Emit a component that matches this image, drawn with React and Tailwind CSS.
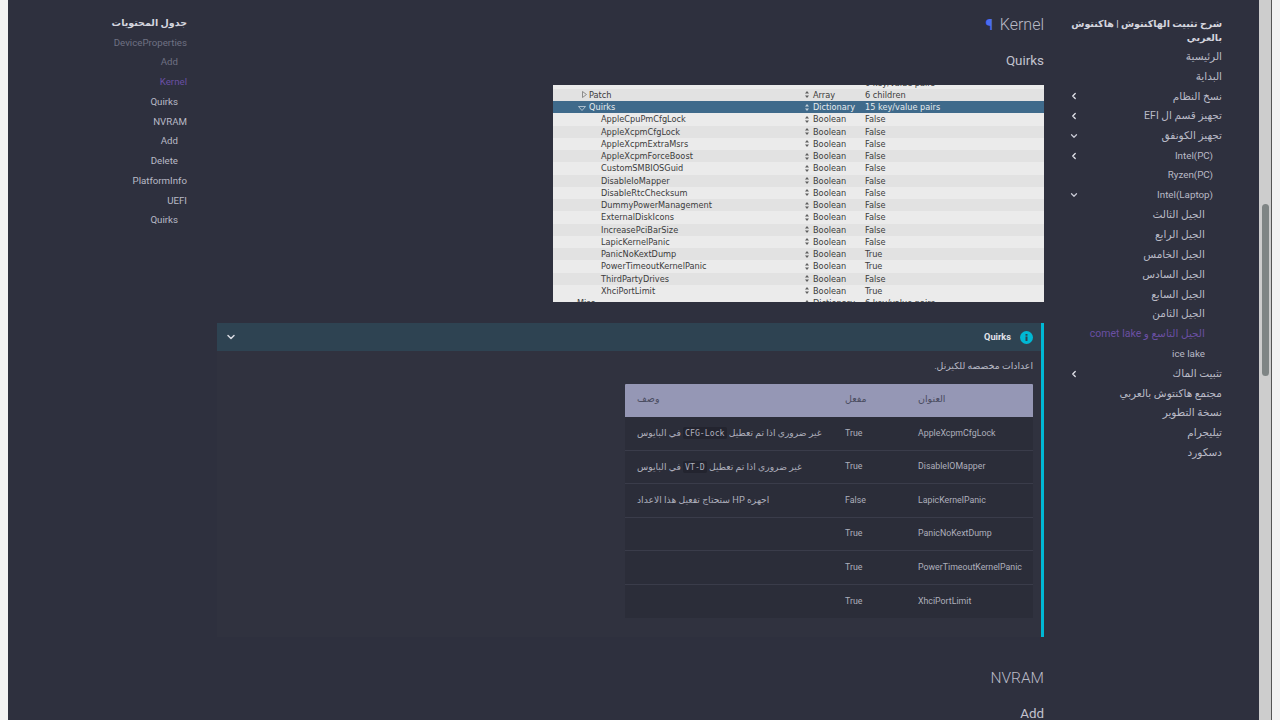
import { ChevronDown, ChevronLeft } from 'lucide-react'

const sideItems = [
  { t: 'الرئيسية' },
  { t: 'البداية' },
  { t: 'نسخ النظام', c: 'left' },
  { t: 'تجهيز قسم ال EFI', c: 'left' },
  { t: 'تجهيز الكونفق', c: 'down' },
  { t: 'Intel(PC)', c: 'left', lvl: 1, latin: true },
  { t: 'Ryzen(PC)', lvl: 1, latin: true },
  { t: 'Intel(Laptop)', c: 'down', lvl: 1, latin: true },
  { t: 'الجيل الثالث', lvl: 2 },
  { t: 'الجيل الرابع', lvl: 2 },
  { t: 'الجيل الخامس', lvl: 2 },
  { t: 'الجيل السادس', lvl: 2 },
  { t: 'الجيل السابع', lvl: 2 },
  { t: 'الجيل الثامن', lvl: 2 },
  { t: 'الجيل التاسع و comet lake', lvl: 2, active: true },
  { t: 'ice lake', lvl: 2, latin: true },
  { t: 'تثبيت الماك', c: 'left' },
  { t: 'مجتمع هاكنتوش بالعربي' },
  { t: 'نسخة التطوير' },
  { t: 'تيليجرام' },
  { t: 'دسكورد' },
]

const tocItems = [
  { t: 'DeviceProperties', dim: true },
  { t: 'Add', sub: true, dim: true },
  { t: 'Kernel', active: true },
  { t: 'Quirks', sub: true },
  { t: 'NVRAM' },
  { t: 'Add', sub: true },
  { t: 'Delete', sub: true },
  { t: 'PlatformInfo' },
  { t: 'UEFI' },
  { t: 'Quirks', sub: true },
]

const plist = [
  ['AppleCpuPmCfgLock', 'False'],
  ['AppleXcpmCfgLock', 'False'],
  ['AppleXcpmExtraMsrs', 'False'],
  ['AppleXcpmForceBoost', 'False'],
  ['CustomSMBIOSGuid', 'False'],
  ['DisableIoMapper', 'False'],
  ['DisableRtcChecksum', 'False'],
  ['DummyPowerManagement', 'False'],
  ['ExternalDiskIcons', 'False'],
  ['IncreasePciBarSize', 'False'],
  ['LapicKernelPanic', 'False'],
  ['PanicNoKextDump', 'True'],
  ['PowerTimeoutKernelPanic', 'True'],
  ['ThirdPartyDrives', 'False'],
  ['XhciPortLimit', 'True'],
]

const quirks = [
  { name: 'AppleXcpmCfgLock', on: 'True', desc: ['غير ضروري اذا تم تعطيل ', 'CFG-Lock', ' في البايوس'] },
  { name: 'DisableIOMapper', on: 'True', desc: ['غير ضروري اذا تم تعطيل ', 'VT-D', ' في البايوس'] },
  { name: 'LapicKernelPanic', on: 'False', desc: ['اجهزه HP ستحتاج تفعيل هذا الاعداد'] },
  { name: 'PanicNoKextDump', on: 'True' },
  { name: 'PowerTimeoutKernelPanic', on: 'True' },
  { name: 'XhciPortLimit', on: 'True' },
]

function PlistRow({ indent, name, type, value, even, selected, arrow }) {
  return (
    <div className={`flex h-[12.26px] items-center text-[8.2px] leading-none ${selected ? 'bg-[#3f6a8b] text-[#e6eaee]' : even ? 'bg-[#e2e2e2] text-[#3c3c3c]' : 'bg-[#ebebeb] text-[#3c3c3c]'}`}>
      <div className={`w-[252px] shrink-0 flex items-center ${indent}`}>
        {arrow === 'right' && (
          <svg width="5" height="7" viewBox="0 0 5 7" className="mr-[2px] -ml-[7px]">
            <path d="M0.5 0.5L4.5 3.5L0.5 6.5Z" fill="none" stroke="#777" strokeWidth="0.8" />
          </svg>
        )}
        {arrow === 'down' && (
          <svg width="8" height="5" viewBox="0 0 8 5" className="mr-[3px] -ml-[11px] mt-[2px]">
            <path d="M0.5 0.5L7.5 0.5L4 4.5Z" fill="none" stroke="#c8d4de" strokeWidth="0.8" />
          </svg>
        )}
        {name}
      </div>
      <div className="w-[60px] shrink-0 flex items-center gap-[4px]">
        {type && (
          <svg width="4" height="7" viewBox="0 0 4 7" className="opacity-80">
            <path d="M2 0L4 2.6H0ZM2 7L0 4.4H4Z" fill="currentColor" />
          </svg>
        )}
        {type}
      </div>
      <div>{value}</div>
    </div>
  )
}

function PlistShot() {
  return (
    <div dir="ltr" className="w-[491px] h-[217px] overflow-hidden bg-[#e8e8e8] font-['DejaVu_Sans',sans-serif]">
      <div className="-mt-[8.5px]">
        <PlistRow indent="pl-[24px]" name="" type="" value="6 key/value pairs" />
        <PlistRow indent="pl-[36px]" name="Patch" type="Array" value="6 children" even arrow="right" />
        <PlistRow indent="pl-[36px]" name="Quirks" type="Dictionary" value="15 key/value pairs" selected arrow="down" />
        {plist.map(([k, v], i) => (
          <PlistRow key={k} indent="pl-[48px]" name={k} type="Boolean" value={v} even={i % 2 === 1} />
        ))}
        <PlistRow indent="pl-[24px]" name="Misc" type="Dictionary" value="6 key/value pairs" />
      </div>
    </div>
  )
}

function SideRow({ item }) {
  const pad = item.lvl === 1 ? 'pr-[9px]' : item.lvl === 2 ? 'pr-[17px]' : ''
  return (
    <div className={`flex items-center justify-between h-[19.8px] ${pad}`}>
      <bdi className={`${item.latin ? 'text-[9.8px]' : ''} ${item.active ? 'text-[#6a4fa3]' : 'text-[#b9bac6]'}`}>{item.t}</bdi>
      {item.c === 'left' && <ChevronLeft size={10} strokeWidth={3} className="text-[#e4e5ec]" />}
      {item.c === 'down' && <ChevronDown size={10} strokeWidth={3} className="text-[#c8c9d4]" />}
    </div>
  )
}

function Sidebar() {
  return (
    <aside className="w-[153px] shrink-0 pt-[17px] text-[10.5px]">
      <div className="font-bold text-[9.5px] whitespace-nowrap text-[#d4d5de] leading-[14px] mb-[2px]">
        شرح تثبيت الهاكنتوش | هاكنتوش
        <br />
        بالعربي
      </div>
      {sideItems.map((item, i) => <SideRow key={i} item={item} />)}
    </aside>
  )
}

function Toc() {
  return (
    <aside className="w-[100px] shrink-0 mr-[5px] pt-[16px] text-[9.7px]">
      <div className="font-bold text-[9.5px] text-[#d4d5de] leading-[14px] mb-[3px]">جدول المحتويات</div>
      {tocItems.map((it, i) => (
        <div key={i} className={`h-[19.75px] flex items-center ${it.sub ? 'pr-[9px]' : ''} ${it.active ? 'text-[#6a4fa3]' : it.dim ? 'text-[#6f7083]' : 'text-[#b9bac6]'}`}>
          {it.t}
        </div>
      ))}
    </aside>
  )
}

function Admonition() {
  return (
    <div className="mt-[21px] h-[314px] bg-[#30323f] border-r-[3px] border-r-[#00b8d4]">
      <div className="h-[28px] bg-[#2e4352] flex items-center justify-between pr-[8px] pl-[8px]">
        <div className="flex items-center gap-[9px]">
          <svg width="13" height="13" viewBox="0 0 13 13" className="mt-[1px]">
            <circle cx="6.5" cy="6.5" r="6.5" fill="#00b8d4" />
            <rect x="5.5" y="5.5" width="2" height="4.5" fill="#2e4352" />
            <rect x="5.5" y="3" width="2" height="1.7" fill="#2e4352" />
          </svg>
          <span className="text-[9.2px] font-bold text-[#e2e3ea]">Quirks</span>
        </div>
        <ChevronDown size={12} strokeWidth={3} className="text-[#d8dae2]" />
      </div>
      <div className="pr-[8px] pt-[8px] text-[9.3px] leading-[14px] text-[#b9bac6]">اعدادات مخصصه للكيرنل.</div>
      <div className="mt-[11px] mr-[8px] w-[408px] text-[8.8px] text-[#aeafbc]">
        <div className="grid grid-cols-[127px_73px_208px] h-[33px] pb-[2px] items-center bg-[#9597b5] text-[#4a4c60] rounded-t-[1px] text-[9.5px]">
          <div className="pl-[12px] text-left">العنوان</div>
          <div className="pl-[12px] text-left">مفعل</div>
          <div className="pl-[12px] text-left">وصف</div>
        </div>
        {quirks.map((q, i) => (
          <div key={q.name} className={`grid grid-cols-[127px_73px_208px] h-[33.5px] items-center bg-[#2b2d39] ${i < 5 ? 'border-b border-b-[#3a3c4a]' : ''}`}>
            <div dir="ltr" className="pl-[12px] whitespace-nowrap">{q.name}</div>
            <div dir="ltr" className="pl-[12px]">{q.on}</div>
            <div className="pl-[12px] flex justify-end">
              {q.desc && (
                <div dir="rtl" className="w-full text-left text-[9.2px]">
                  <span className="inline-block">
                    {q.desc[0]}
                    {q.desc[1] && <code dir="ltr" className="font-['DejaVu_Sans_Mono',monospace] text-[8.2px] bg-[#23242f] px-[2px] py-[1px] rounded-[2px]">{q.desc[1]}</code>}
                    {q.desc[2]}
                  </span>
                </div>
              )}
            </div>
          </div>
        ))}
      </div>
    </div>
  )
}

function Content() {
  return (
    <main className="w-[827px] shrink-0 pt-[15px]">
      <h1 className="flex items-center gap-[7px] text-[16px] font-light leading-[20px] text-[#b9bac6]">
        <span>Kernel</span>
        <span className="text-[#4a6cf0] font-bold text-[15px]">¶</span>
      </h1>
      <h2 className="mt-[17px] text-[13.4px] leading-[18px] text-[#c2c3ce]">Quirks</h2>
      <div className="mt-[15px]">
        <PlistShot />
      </div>
      <Admonition />
      <h1 className="mt-[31px] text-[15.5px] font-light leading-[20px] text-[#b9bac6]">NVRAM</h1>
      <h2 className="mt-[17px] text-[13.4px] leading-[18px] text-[#c2c3ce]">Add</h2>
    </main>
  )
}

export default function App() {
  return (
    <div className="flex h-[720px] w-[1280px] overflow-hidden bg-[#f2f2f2] font-['Roboto','Noto_Sans','DejaVu_Sans',sans-serif]">
      <div className="w-[8px] shrink-0" />
      <div dir="rtl" className="w-[1251px] shrink-0 bg-[#2e303e] flex pr-[37px] gap-x-[25px]">
        <Sidebar />
        <Content />
        <Toc />
      </div>
      <div className="w-[13px] shrink-0 bg-[#cdcdcd] pt-[204px] pl-[3px] border-r border-r-[#555]">
        <div className="w-[7px] h-[172px] rounded-full bg-[#7f8585]" />
      </div>
    </div>
  )
}
